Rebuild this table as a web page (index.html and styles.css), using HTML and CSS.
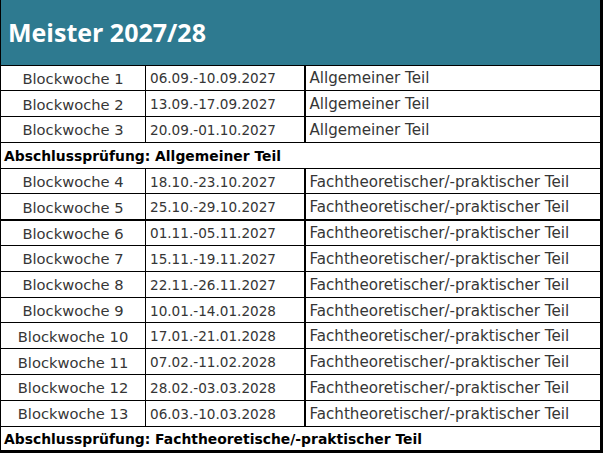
FILE: index.html
```html
<!DOCTYPE html>
<html lang="de">
<head>
    <meta charset="UTF-8">
    <title>Meister 2027/28</title>
    <link rel="stylesheet" href="styles.css">
</head>
<body>
    <table class="Plan">
        <colgroup>
            <col class="Plan-colWeek">
            <col class="Plan-colDate">
            <col class="Plan-colPart">
        </colgroup>
        <tr class="Plan-head"><th colspan="3">Meister 2027/28</th></tr>
        <tr><td class="Plan-week">Blockwoche 1</td><td class="Plan-date">06.09.-10.09.2027</td><td class="Plan-part">Allgemeiner Teil</td></tr>
        <tr><td class="Plan-week">Blockwoche 2</td><td class="Plan-date">13.09.-17.09.2027</td><td class="Plan-part">Allgemeiner Teil</td></tr>
        <tr><td class="Plan-week">Blockwoche 3</td><td class="Plan-date">20.09.-01.10.2027</td><td class="Plan-part">Allgemeiner Teil</td></tr>
        <tr class="Plan-exam"><td colspan="3">Abschlussprüfung: Allgemeiner Teil</td></tr>
        <tr><td class="Plan-week">Blockwoche 4</td><td class="Plan-date">18.10.-23.10.2027</td><td class="Plan-part">Fachtheoretischer/-praktischer Teil</td></tr>
        <tr class="Plan-break"><td class="Plan-week">Blockwoche 5</td><td class="Plan-date">25.10.-29.10.2027</td><td class="Plan-part">Fachtheoretischer/-praktischer Teil</td></tr>
        <tr><td class="Plan-week">Blockwoche 6</td><td class="Plan-date">01.11.-05.11.2027</td><td class="Plan-part">Fachtheoretischer/-praktischer Teil</td></tr>
        <tr><td class="Plan-week">Blockwoche 7</td><td class="Plan-date">15.11.-19.11.2027</td><td class="Plan-part">Fachtheoretischer/-praktischer Teil</td></tr>
        <tr><td class="Plan-week">Blockwoche 8</td><td class="Plan-date">22.11.-26.11.2027</td><td class="Plan-part">Fachtheoretischer/-praktischer Teil</td></tr>
        <tr><td class="Plan-week">Blockwoche 9</td><td class="Plan-date">10.01.-14.01.2028</td><td class="Plan-part">Fachtheoretischer/-praktischer Teil</td></tr>
        <tr><td class="Plan-week">Blockwoche 10</td><td class="Plan-date">17.01.-21.01.2028</td><td class="Plan-part">Fachtheoretischer/-praktischer Teil</td></tr>
        <tr><td class="Plan-week">Blockwoche 11</td><td class="Plan-date">07.02.-11.02.2028</td><td class="Plan-part">Fachtheoretischer/-praktischer Teil</td></tr>
        <tr><td class="Plan-week">Blockwoche 12</td><td class="Plan-date">28.02.-03.03.2028</td><td class="Plan-part">Fachtheoretischer/-praktischer Teil</td></tr>
        <tr><td class="Plan-week">Blockwoche 13</td><td class="Plan-date">06.03.-10.03.2028</td><td class="Plan-part">Fachtheoretischer/-praktischer Teil</td></tr>
        <tr class="Plan-exam"><td colspan="3">Abschlussprüfung: Fachtheoretische/-praktischer Teil</td></tr>
    </table>
</body>
</html>
```
FILE: styles.css
```css
* {
    margin: 0;
    padding: 0;
    box-sizing: border-box;
}

html, body {
    background: #ffffff;
    font-family: 'DejaVu Sans', sans-serif;
}

.Plan {
    width: 603px;
    table-layout: fixed;
    border-collapse: collapse;
    border-left: 1px solid #000000;
    border-right: 3px solid #000000;
    border-bottom: 3px solid #000000;
}

.Plan-colWeek {
    width: 145px;
}

.Plan-colDate {
    width: 159px;
}

.Plan td {
    height: 25.8px;
    border: 1px solid #000000;
    padding: 1px 0 0 2px;
    font-size: 14.7px;
    color: #363636;
    white-space: nowrap;
    overflow: hidden;
    vertical-align: middle;
}

.Plan-head th {
    height: 65px;
    background: #2e7a90;
    color: #ffffff;
    text-align: left;
    padding: 0 0 0 7px;
    font-family: 'Open Sans', sans-serif;
    font-size: 25px;
    font-weight: bold;
    border-bottom: 1px solid #000000;
}

.Plan .Plan-week {
    text-align: center;
    padding-left: 0;
}

.Plan .Plan-date {
    padding-left: 4px;
    font-size: 13.6px;
}

.Plan .Plan-part {
    border-left: 2px solid #000000;
    padding-left: 4px;
    font-size: 15.1px;
}

.Plan-break td {
    border-bottom: 2px solid #000000;
}

.Plan .Plan-exam td {
    font-size: 13.9px;
    font-weight: bold;
    color: #000000;
    padding-left: 3px;
}
```
